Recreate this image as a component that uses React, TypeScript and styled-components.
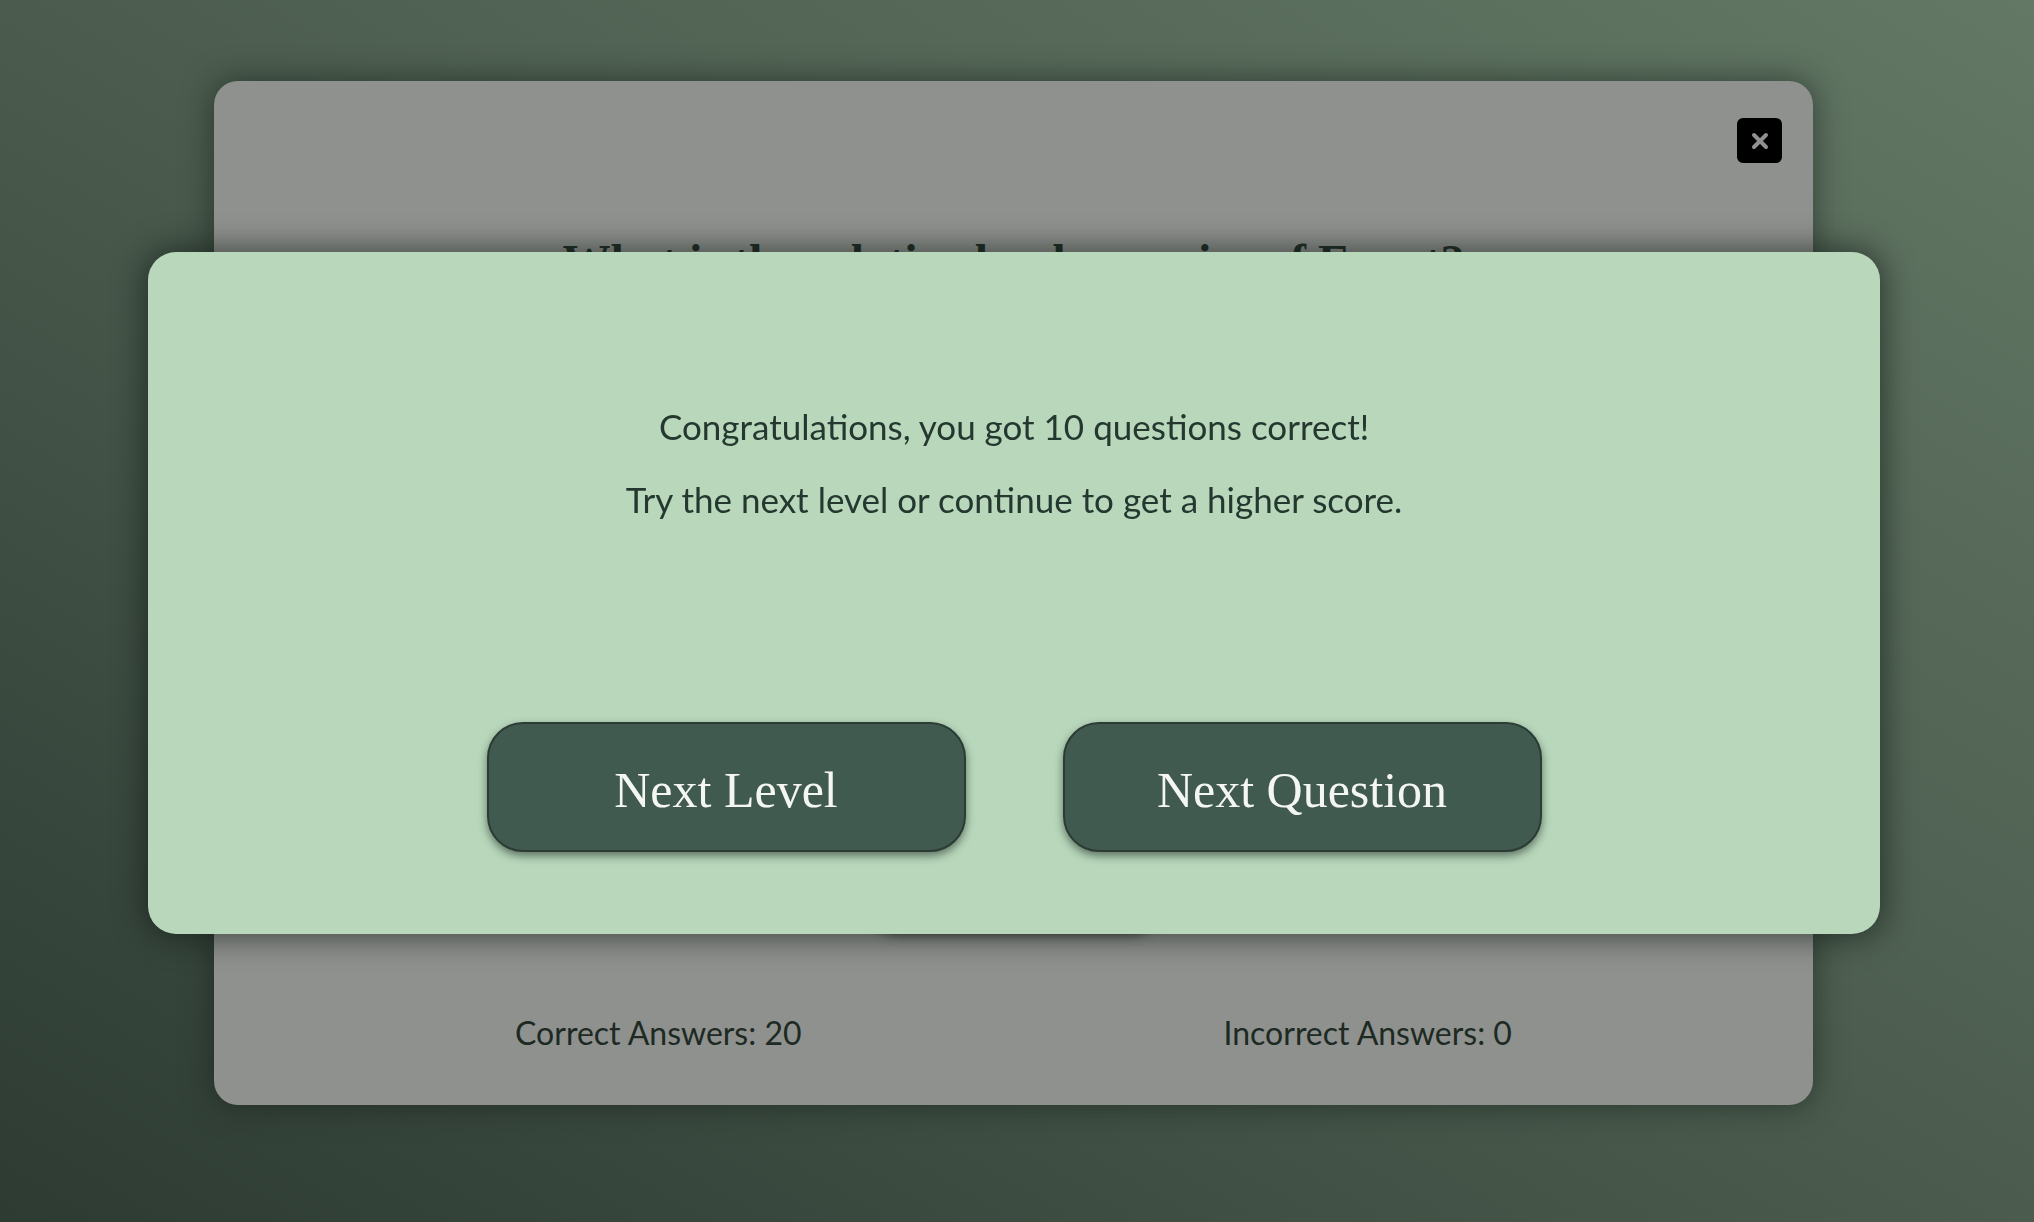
import React from "react";
import styled, { createGlobalStyle } from "styled-components";

const GlobalStyle = createGlobalStyle`
  html, body {
    margin: 0;
    padding: 0;
  }
  body {
    width: 2034px;
    height: 1222px;
    overflow: hidden;
    background: linear-gradient(to top right, #2d3b33 0%, #4b5c4e 50%, #637865 100%);
    font-family: Lato, "Liberation Sans", sans-serif;
  }
`;

const Page = styled.main`
  box-sizing: border-box;
  width: 2034px;
  height: 1222px;
  padding: 81px 0 0 214px;
  display: flex;
  align-items: flex-start;
`;

const Card = styled.section`
  box-sizing: border-box;
  width: 1599px;
  height: 1024px;
  padding: 37px 31px 53px;
  border-radius: 24px;
  background: #8f918e;
  box-shadow: 0 0 30px 2px rgba(20, 30, 24, 0.55);
  display: flex;
  flex-direction: column;
`;

const CardHeader = styled.header`
  display: flex;
  justify-content: flex-end;
`;

const CloseButton = styled.button`
  width: 45px;
  height: 45px;
  padding: 0;
  border: none;
  border-radius: 6px;
  background: #000;
  display: flex;
  align-items: center;
  justify-content: center;
  cursor: pointer;
`;

const Question = styled.h1`
  margin: 71px 0 0;
  text-align: center;
  font-family: "Liberation Serif", "DejaVu Serif", serif;
  font-weight: 700;
  font-size: 48px;
  line-height: 56px;
  color: #1f2d26;
`;

const Body = styled.div`
  flex: 1;
  display: flex;
  flex-direction: column;
  align-items: center;
  justify-content: flex-end;
  padding-bottom: 86px;
`;

const SubmitButton = styled.button`
  width: 290px;
  height: 80px;
  border: 2px solid #22302a;
  border-radius: 28px;
  background: #2f4139;
  color: #f3f5f0;
  font-family: "Liberation Serif", serif;
  font-size: 26px;
  box-shadow: 0 6px 12px rgba(0, 0, 0, 0.6);
`;

const ScoreRow = styled.footer`
  display: flex;
  justify-content: center;
  gap: 422px;
`;

const Score = styled.span`
  font-family: Lato, sans-serif;
  font-size: 32px;
  line-height: 38px;
  color: #1d2a23;
`;

const Modal = styled.div`
  position: fixed;
  left: 148px;
  top: 252px;
  width: 1732px;
  height: 682px;
  box-sizing: border-box;
  padding-top: 153px;
  border-radius: 28px;
  background: #b8d7bb;
  box-shadow: 0 0 30px 4px rgba(15, 25, 20, 0.6);
  display: flex;
  flex-direction: column;
  align-items: center;
`;

const Message = styled.p`
  margin: 0;
  font-family: Lato, sans-serif;
  font-size: 35px;
  line-height: 42px;
  color: #243830;
  text-align: center;
  & + & {
    margin-top: 31px;
  }
`;

const Actions = styled.div`
  margin-top: 202px;
  display: flex;
  gap: 97px;
`;

const ActionButton = styled.button`
  box-sizing: border-box;
  width: 479px;
  height: 130px;
  border: 2px solid #2b3c34;
  border-radius: 36px;
  background: #415a50;
  color: #f4f6f1;
  font-family: "Liberation Serif", "DejaVu Serif", serif;
  font-size: 50px;
  display: flex;
  align-items: center;
  justify-content: center;
  padding: 6px 0 0;
  box-shadow: 0 4px 9px rgba(20, 35, 28, 0.55);
  cursor: pointer;
`;

const CloseIcon = () => (
  <svg width="18" height="18" viewBox="0 0 18 18">
    <path d="M3 3 L15 15 M15 3 L3 15" stroke="#8f918e" strokeWidth="4" strokeLinecap="round" />
  </svg>
);

export default function App() {
  return (
    <>
      <GlobalStyle />
      <Page>
        <Card>
          <CardHeader>
            <CloseButton aria-label="Close">
              <CloseIcon />
            </CloseButton>
          </CardHeader>
          <Question>What is the relative land area size of Egypt?</Question>
          <Body>
            <SubmitButton>Submit</SubmitButton>
          </Body>
          <ScoreRow>
            <Score>Correct Answers: 20</Score>
            <Score>Incorrect Answers: 0</Score>
          </ScoreRow>
        </Card>
      </Page>
      <Modal role="dialog">
        <Message>Congratulations, you got 10 questions correct!</Message>
        <Message>Try the next level or continue to get a higher score.</Message>
        <Actions>
          <ActionButton>Next Level</ActionButton>
          <ActionButton>Next Question</ActionButton>
        </Actions>
      </Modal>
    </>
  );
}
